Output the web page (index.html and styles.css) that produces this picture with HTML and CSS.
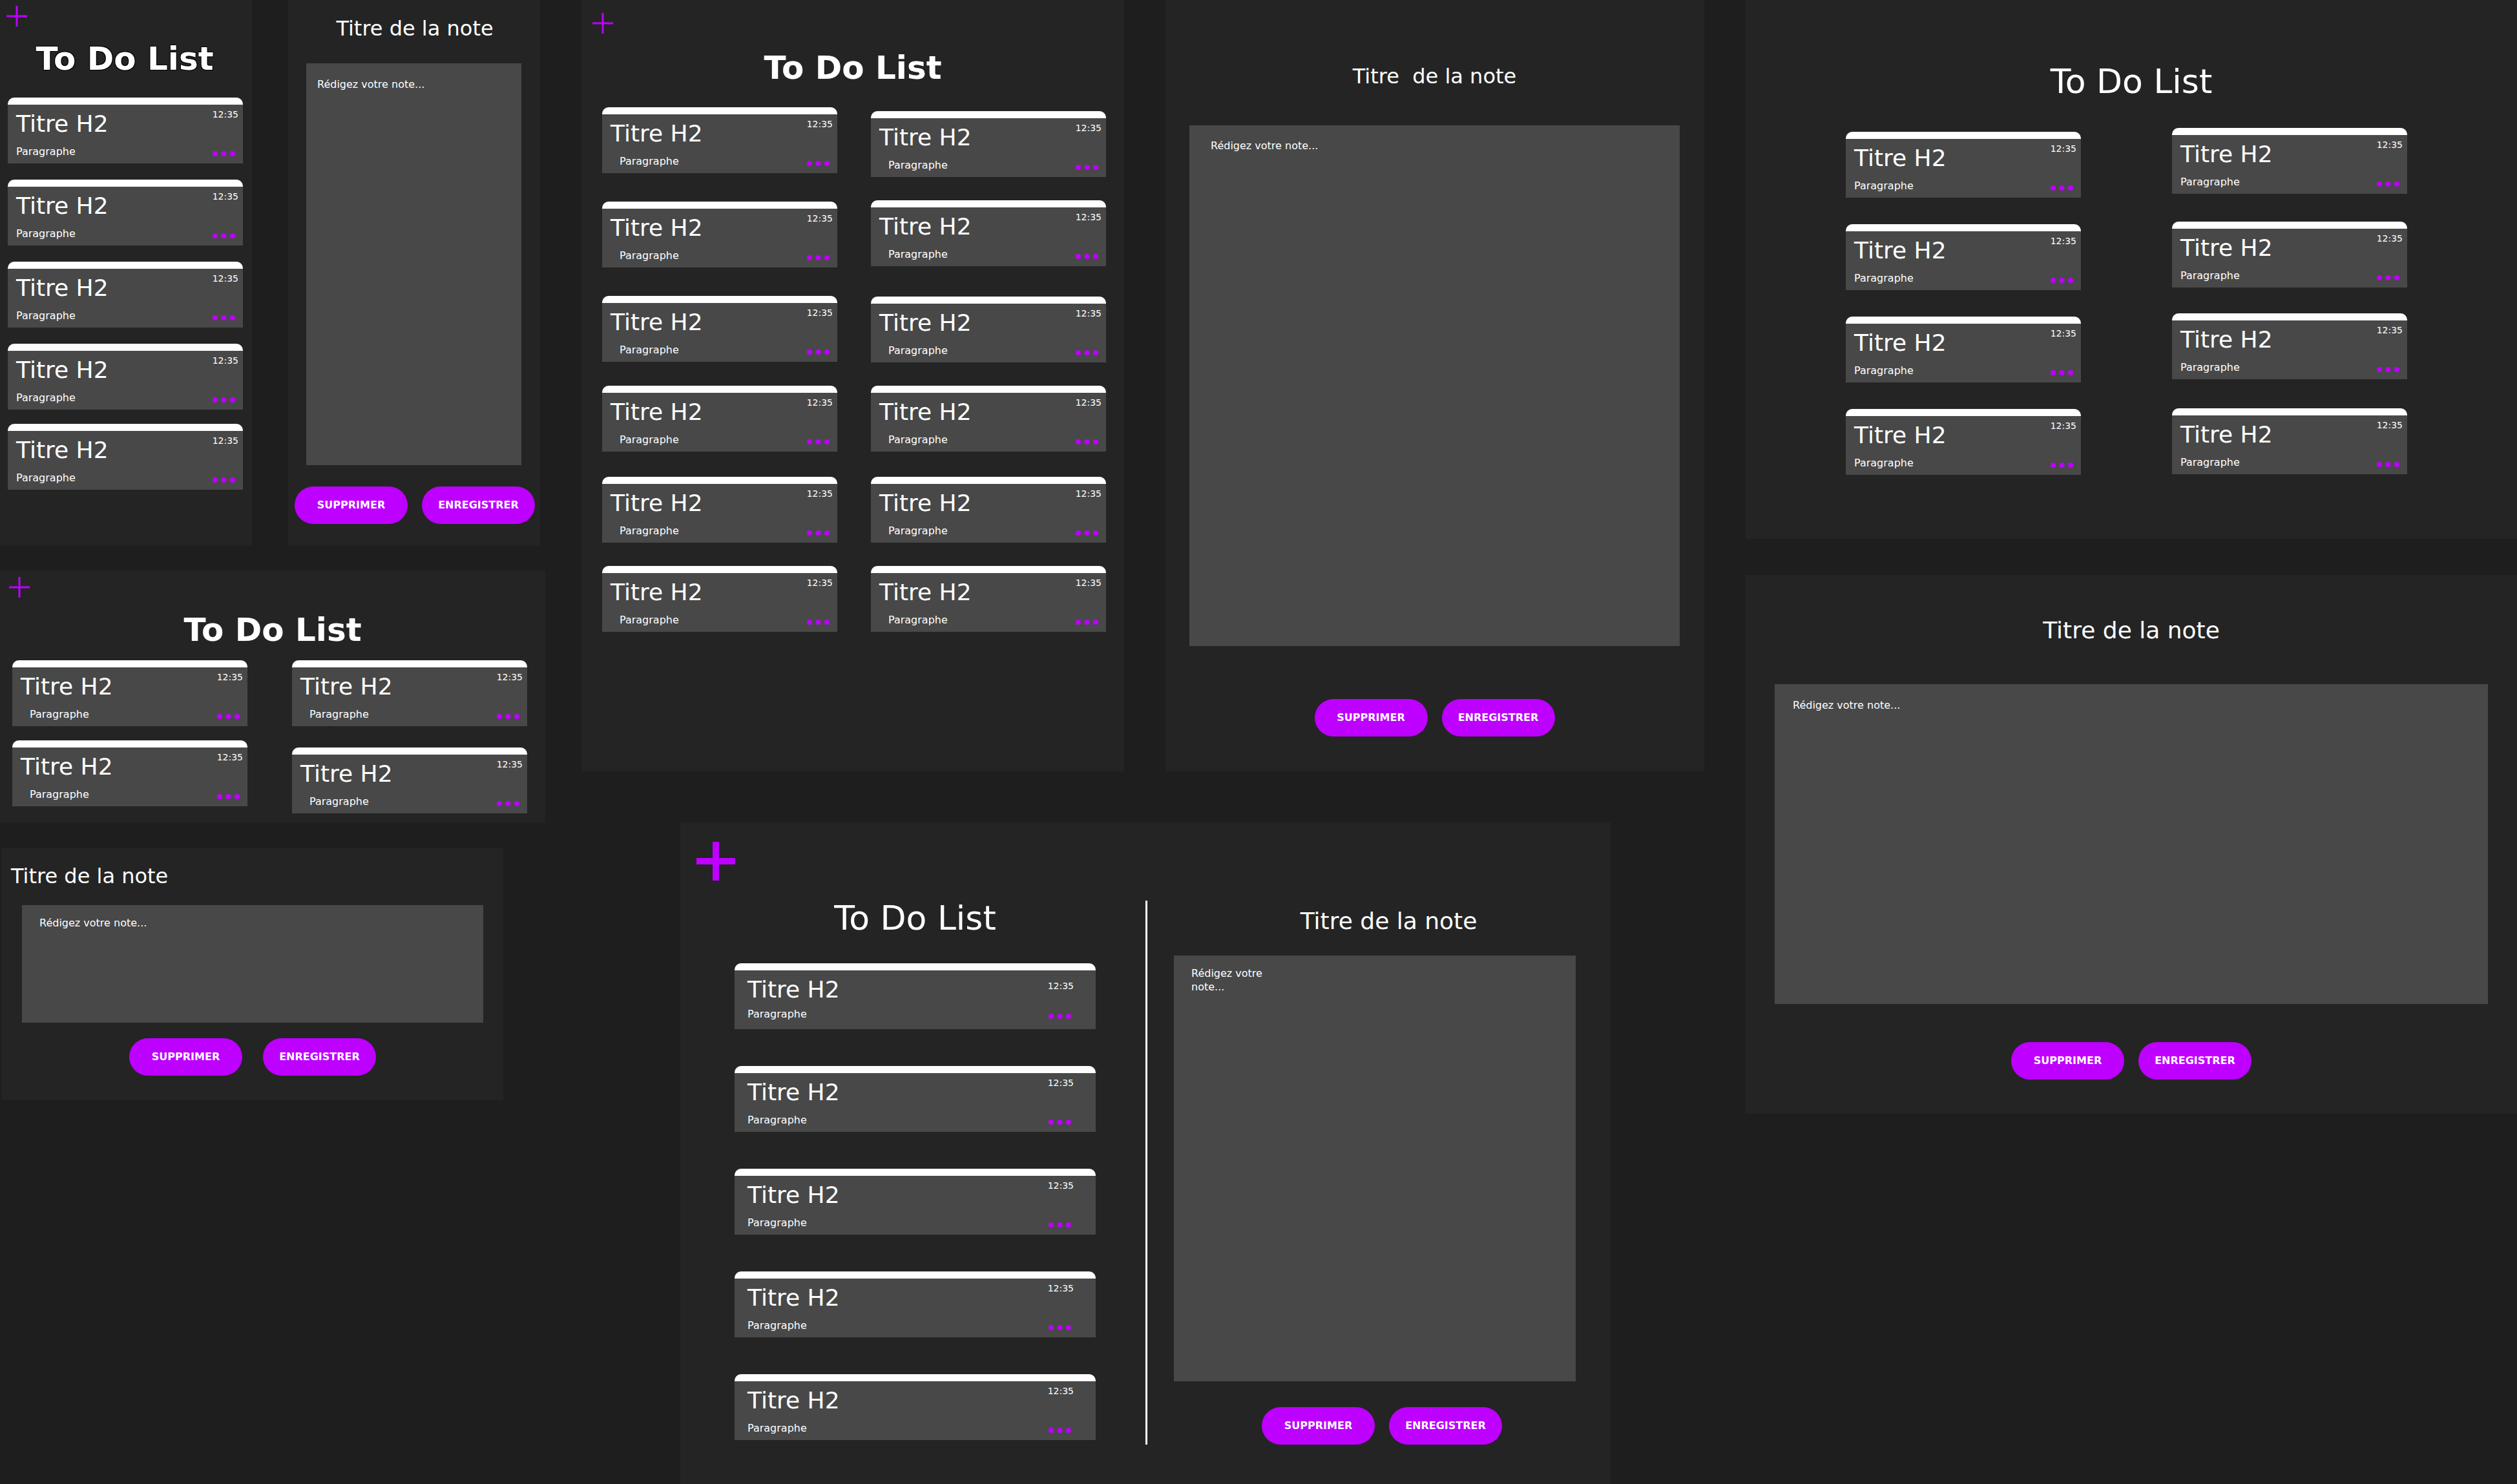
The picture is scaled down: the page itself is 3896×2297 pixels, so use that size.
FILE: index.html
```html
<!DOCTYPE html>
<html lang="fr">
<head>
<meta charset="utf-8">
<meta name="viewport" content="width=device-width, initial-scale=1">
<title>To Do List</title>
<link rel="stylesheet" href="styles.css">
</head>
<body>
<svg class="sprite" aria-hidden="true">
  <symbol id="plus" viewBox="0 0 32 32"><path d="M16 0v32M0 16h32" stroke="currentColor" stroke-width="3"/></symbol>
  <symbol id="plus-bold" viewBox="0 0 60 60"><path d="M30 0v60M0 30h60" stroke="currentColor" stroke-width="10"/></symbol>
  <symbol id="dots" viewBox="0 0 35 14"><g fill="currentColor"><circle cx="4" cy="7" r="4"/><circle cx="17.500" cy="7" r="4"/><circle cx="31" cy="7" r="4"/></g></symbol>
</svg>
<main class="canvas">
  <div class="stack stack-mobile">
    <div class="pair">
      <section class="frame list list-phone">
        <button class="add" type="button" aria-label="Ajouter"><svg><use href="#plus"/></svg></button>
        <h1 class="title title-bold title-outlined">To Do List</h1>
        <div class="columns">
          <div class="cards">
            <article class="card"><div class="main"><h2>Titre H2</h2><p>Paragraphe</p></div><div class="meta"><time>12:35</time><button type="button" aria-label="Options"><svg><use href="#dots"/></svg></button></div></article>
            <article class="card"><div class="main"><h2>Titre H2</h2><p>Paragraphe</p></div><div class="meta"><time>12:35</time><button type="button" aria-label="Options"><svg><use href="#dots"/></svg></button></div></article>
            <article class="card"><div class="main"><h2>Titre H2</h2><p>Paragraphe</p></div><div class="meta"><time>12:35</time><button type="button" aria-label="Options"><svg><use href="#dots"/></svg></button></div></article>
            <article class="card"><div class="main"><h2>Titre H2</h2><p>Paragraphe</p></div><div class="meta"><time>12:35</time><button type="button" aria-label="Options"><svg><use href="#dots"/></svg></button></div></article>
            <article class="card"><div class="main"><h2>Titre H2</h2><p>Paragraphe</p></div><div class="meta"><time>12:35</time><button type="button" aria-label="Options"><svg><use href="#dots"/></svg></button></div></article>
          </div>
        </div>
      </section>
      <section class="frame note note-phone">
        <h2 class="note-title"><label for="note-1">Titre de la note</label></h2>
        <textarea id="note-1" placeholder="Rédigez votre note..."></textarea>
        <div class="actions"><button type="button">SUPPRIMER</button><button type="button">ENREGISTRER</button></div>
      </section>
    </div>
    <section class="frame list list-landscape">
      <button class="add" type="button" aria-label="Ajouter"><svg><use href="#plus"/></svg></button>
      <h1 class="title title-bold">To Do List</h1>
      <div class="columns">
        <div class="cards">
          <article class="card"><div class="main"><h2>Titre H2</h2><p>Paragraphe</p></div><div class="meta"><time>12:35</time><button type="button" aria-label="Options"><svg><use href="#dots"/></svg></button></div></article>
          <article class="card"><div class="main"><h2>Titre H2</h2><p>Paragraphe</p></div><div class="meta"><time>12:35</time><button type="button" aria-label="Options"><svg><use href="#dots"/></svg></button></div></article>
        </div>
        <div class="cards cards-right">
          <article class="card"><div class="main"><h2>Titre H2</h2><p>Paragraphe</p></div><div class="meta"><time>12:35</time><button type="button" aria-label="Options"><svg><use href="#dots"/></svg></button></div></article>
          <article class="card"><div class="main"><h2>Titre H2</h2><p>Paragraphe</p></div><div class="meta"><time>12:35</time><button type="button" aria-label="Options"><svg><use href="#dots"/></svg></button></div></article>
        </div>
      </div>
    </section>
    <section class="frame note note-landscape">
      <h2 class="note-title"><label for="note-2">Titre de la note</label></h2>
      <textarea id="note-2" placeholder="Rédigez votre note..."></textarea>
      <div class="actions"><button type="button">SUPPRIMER</button><button type="button">ENREGISTRER</button></div>
    </section>
  </div>

  <div class="stack stack-middle">
    <div class="pair">
      <section class="frame list list-tablet">
        <button class="add" type="button" aria-label="Ajouter"><svg><use href="#plus"/></svg></button>
        <h1 class="title title-bold">To Do List</h1>
        <div class="columns">
          <div class="cards">
            <article class="card"><div class="main"><h2>Titre H2</h2><p>Paragraphe</p></div><div class="meta"><time>12:35</time><button type="button" aria-label="Options"><svg><use href="#dots"/></svg></button></div></article>
            <article class="card"><div class="main"><h2>Titre H2</h2><p>Paragraphe</p></div><div class="meta"><time>12:35</time><button type="button" aria-label="Options"><svg><use href="#dots"/></svg></button></div></article>
            <article class="card"><div class="main"><h2>Titre H2</h2><p>Paragraphe</p></div><div class="meta"><time>12:35</time><button type="button" aria-label="Options"><svg><use href="#dots"/></svg></button></div></article>
            <article class="card"><div class="main"><h2>Titre H2</h2><p>Paragraphe</p></div><div class="meta"><time>12:35</time><button type="button" aria-label="Options"><svg><use href="#dots"/></svg></button></div></article>
            <article class="card"><div class="main"><h2>Titre H2</h2><p>Paragraphe</p></div><div class="meta"><time>12:35</time><button type="button" aria-label="Options"><svg><use href="#dots"/></svg></button></div></article>
            <article class="card"><div class="main"><h2>Titre H2</h2><p>Paragraphe</p></div><div class="meta"><time>12:35</time><button type="button" aria-label="Options"><svg><use href="#dots"/></svg></button></div></article>
          </div>
          <div class="cards cards-right">
            <article class="card"><div class="main"><h2>Titre H2</h2><p>Paragraphe</p></div><div class="meta"><time>12:35</time><button type="button" aria-label="Options"><svg><use href="#dots"/></svg></button></div></article>
            <article class="card"><div class="main"><h2>Titre H2</h2><p>Paragraphe</p></div><div class="meta"><time>12:35</time><button type="button" aria-label="Options"><svg><use href="#dots"/></svg></button></div></article>
            <article class="card"><div class="main"><h2>Titre H2</h2><p>Paragraphe</p></div><div class="meta"><time>12:35</time><button type="button" aria-label="Options"><svg><use href="#dots"/></svg></button></div></article>
            <article class="card"><div class="main"><h2>Titre H2</h2><p>Paragraphe</p></div><div class="meta"><time>12:35</time><button type="button" aria-label="Options"><svg><use href="#dots"/></svg></button></div></article>
            <article class="card"><div class="main"><h2>Titre H2</h2><p>Paragraphe</p></div><div class="meta"><time>12:35</time><button type="button" aria-label="Options"><svg><use href="#dots"/></svg></button></div></article>
            <article class="card"><div class="main"><h2>Titre H2</h2><p>Paragraphe</p></div><div class="meta"><time>12:35</time><button type="button" aria-label="Options"><svg><use href="#dots"/></svg></button></div></article>
          </div>
        </div>
      </section>
      <section class="frame note note-tablet">
        <h2 class="note-title"><label for="note-3">Titre  de la note</label></h2>
        <textarea id="note-3" placeholder="Rédigez votre note..."></textarea>
        <div class="actions"><button type="button">SUPPRIMER</button><button type="button">ENREGISTRER</button></div>
      </section>
    </div>
    <section class="frame desktop">
      <button class="add add-large" type="button" aria-label="Ajouter"><svg><use href="#plus-bold"/></svg></button>
      <div class="panes">
        <div class="list list-desktop">
          <h1 class="title">To Do List</h1>
          <div class="cards">
            <article class="card card-tight"><div class="main"><h2>Titre H2</h2><p>Paragraphe</p></div><div class="meta"><time>12:35</time><button type="button" aria-label="Options"><svg><use href="#dots"/></svg></button></div></article>
            <article class="card"><div class="main"><h2>Titre H2</h2><p>Paragraphe</p></div><div class="meta"><time>12:35</time><button type="button" aria-label="Options"><svg><use href="#dots"/></svg></button></div></article>
            <article class="card"><div class="main"><h2>Titre H2</h2><p>Paragraphe</p></div><div class="meta"><time>12:35</time><button type="button" aria-label="Options"><svg><use href="#dots"/></svg></button></div></article>
            <article class="card"><div class="main"><h2>Titre H2</h2><p>Paragraphe</p></div><div class="meta"><time>12:35</time><button type="button" aria-label="Options"><svg><use href="#dots"/></svg></button></div></article>
            <article class="card"><div class="main"><h2>Titre H2</h2><p>Paragraphe</p></div><div class="meta"><time>12:35</time><button type="button" aria-label="Options"><svg><use href="#dots"/></svg></button></div></article>
          </div>
        </div>
        <div class="note note-desktop">
          <h2 class="note-title note-title-large"><label for="note-4">Titre de la note</label></h2>
          <textarea id="note-4" placeholder="Rédigez votre note..."></textarea>
          <div class="actions"><button type="button">SUPPRIMER</button><button type="button">ENREGISTRER</button></div>
        </div>
      </div>
    </section>
  </div>

  <div class="stack stack-laptop">
    <section class="frame list list-laptop">
      <h1 class="title">To Do List</h1>
      <div class="columns">
        <div class="cards">
          <article class="card"><div class="main"><h2>Titre H2</h2><p>Paragraphe</p></div><div class="meta"><time>12:35</time><button type="button" aria-label="Options"><svg><use href="#dots"/></svg></button></div></article>
          <article class="card"><div class="main"><h2>Titre H2</h2><p>Paragraphe</p></div><div class="meta"><time>12:35</time><button type="button" aria-label="Options"><svg><use href="#dots"/></svg></button></div></article>
          <article class="card"><div class="main"><h2>Titre H2</h2><p>Paragraphe</p></div><div class="meta"><time>12:35</time><button type="button" aria-label="Options"><svg><use href="#dots"/></svg></button></div></article>
          <article class="card"><div class="main"><h2>Titre H2</h2><p>Paragraphe</p></div><div class="meta"><time>12:35</time><button type="button" aria-label="Options"><svg><use href="#dots"/></svg></button></div></article>
        </div>
        <div class="cards cards-right">
          <article class="card"><div class="main"><h2>Titre H2</h2><p>Paragraphe</p></div><div class="meta"><time>12:35</time><button type="button" aria-label="Options"><svg><use href="#dots"/></svg></button></div></article>
          <article class="card"><div class="main"><h2>Titre H2</h2><p>Paragraphe</p></div><div class="meta"><time>12:35</time><button type="button" aria-label="Options"><svg><use href="#dots"/></svg></button></div></article>
          <article class="card"><div class="main"><h2>Titre H2</h2><p>Paragraphe</p></div><div class="meta"><time>12:35</time><button type="button" aria-label="Options"><svg><use href="#dots"/></svg></button></div></article>
          <article class="card"><div class="main"><h2>Titre H2</h2><p>Paragraphe</p></div><div class="meta"><time>12:35</time><button type="button" aria-label="Options"><svg><use href="#dots"/></svg></button></div></article>
        </div>
      </div>
    </section>
    <section class="frame note note-laptop">
      <h2 class="note-title note-title-large"><label for="note-5">Titre de la note</label></h2>
      <textarea id="note-5" placeholder="Rédigez votre note..."></textarea>
      <div class="actions"><button type="button">SUPPRIMER</button><button type="button">ENREGISTRER</button></div>
    </section>
  </div>
</main>
</body>
</html>
```

FILE: styles.css
```css
:root {
  --canvas: #1e1e1e;
  --frame: #242424;
  --surface: #484848;
  --accent: #bd00ff;
  --text: #ffffff;
}

* {
  box-sizing: border-box;
}

body {
  margin: 0;
  background: var(--canvas);
  color: var(--text);
  font-family: "DejaVu Sans", Verdana, sans-serif;
  font-size: 16px;
  line-height: 20px;
}

h1,
h2,
p {
  margin: 0;
  font-weight: 400;
}

button {
  border: 0;
  padding: 0;
  font: inherit;
  cursor: pointer;
}

.sprite {
  display: none;
}

/* Canvas: mobile, tablet + desktop, laptop */
.canvas {
  display: grid;
  grid-template-columns: 844fr 1794fr 1258fr;
  align-items: start;
}

.stack {
  display: flex;
  flex-direction: column;
}

.stack-mobile {
  gap: 39px;
}

.stack-middle {
  gap: 79px;
  margin-left: 56px;
}

.stack-laptop {
  gap: 56px;
  margin-left: 64px;
}

.pair {
  display: grid;
}

.stack-mobile .pair {
  grid-template-columns: 1fr 1fr;
  gap: 56px;
  padding-right: 8px;
}

.stack-middle .pair {
  grid-template-columns: 840fr 834fr;
  gap: 64px;
}

.frame {
  background: var(--frame);
}

/* Headings */
.title {
  font-size: 52px;
  line-height: 54px;
  text-align: center;
}

.title-bold {
  font-size: 50px;
  line-height: 60px;
  font-weight: 700;
}

.title-outlined {
  text-shadow: 1px 1px 0 #000, -1px -1px 0 #000, 1px -1px 0 #000, -1px 1px 0 #000;
}

.note-title {
  font-size: 32px;
  line-height: 40px;
  text-align: center;
  white-space: pre;
}

.note-title-large {
  font-size: 36px;
}

.add {
  display: block;
  background: none;
  color: var(--accent);
}

.add svg {
  display: block;
  width: 32px;
  height: 32px;
}

.add-large svg {
  width: 60px;
  height: 60px;
}

/* Cards */
.columns {
  display: flex;
}

.cards {
  display: grid;
  align-items: start;
  flex: 1 1 0;
}

.card {
  display: flex;
  justify-content: space-between;
  min-height: 102px;
  border-top: 11px solid #fff;
  border-radius: 10px 10px 0 0;
  background: var(--surface);
}

.card h2 {
  font-size: 36px;
  line-height: 42px;
}

.main,
.meta {
  display: flex;
  flex-direction: column;
  align-self: stretch;
  justify-content: space-between;
}

.main {
  padding: 9px 0 8px 13px;
}

.meta {
  align-items: flex-end;
  padding: 6px 7px 8px 0;
}

.meta time {
  font-size: 14px;
  line-height: 18px;
}

.meta button {
  margin-right: 5px;
  background: none;
  color: var(--accent);
}

.meta svg {
  display: block;
  width: 35px;
  height: 14px;
}

/* List frames */
.list-phone {
  padding: 9px 14px 0 10px;
}

.list-phone .title {
  margin: 20px 0 30px;
}

.list-phone .columns {
  padding-left: 2px;
}

.list-phone .cards {
  grid-template-rows: repeat(3, 127px) 124px auto;
}

.list-landscape {
  padding: 10px 28px 14px 14px;
}

.list-landscape .title {
  margin: 20px 0 17px 14px;
}

.list-landscape .columns {
  gap: 69px;
  padding-left: 5px;
}

.list-landscape .cards {
  grid-template-rows: 124px auto;
}

.list-landscape .cards-right {
  grid-template-rows: 135px auto;
}

.list-landscape p,
.list-tablet p {
  padding-left: 14px;
}

.list-tablet {
  padding: 20px 28px 0 17px;
}

.list-tablet .title {
  margin: 23px 0 31px 11px;
}

.list-tablet .columns {
  gap: 52px;
  padding-left: 15px;
}

.list-tablet .cards {
  grid-template-rows: 146px 146px 139px 141px 138px auto;
}

.list-tablet .cards-right {
  padding-top: 6px;
  grid-template-rows: 138px 149px 138px 141px 138px auto;
}

.list-laptop {
  padding: 99px 0 99px;
}

.list-laptop .columns {
  gap: 141px;
  padding: 45px 170px 0 155px;
}

.list-laptop .cards {
  padding-top: 6px;
  grid-template-rows: repeat(3, 143px) auto;
}

.list-laptop .cards-right {
  padding-top: 0;
  grid-template-rows: 145px 142px 147px auto;
}

/* Note frames */
textarea {
  display: block;
  width: 100%;
  border: 0;
  border-radius: 0;
  outline: 0;
  resize: none;
  background: var(--surface);
  color: var(--text);
  font: inherit;
  line-height: 21px;
}

textarea::placeholder {
  color: var(--text);
  opacity: 1;
}

.actions {
  display: flex;
  justify-content: center;
  gap: 22px;
}

.actions button {
  width: 175px;
  height: 58px;
  border-radius: 29px;
  background: var(--accent);
  color: var(--text);
  font-weight: 700;
}

.note-phone {
  display: flex;
  flex-direction: column;
  padding: 24px 8px 33px 10px;
}

.note-phone textarea {
  width: auto;
  height: 622px;
  margin: 34px 21px 33px 18px;
  padding: 22px 17px;
}

.note-landscape {
  margin: 0 65px 0 2px;
  padding: 24px 31px 37px 15px;
}

.note-landscape .note-title {
  text-align: left;
}

.note-landscape textarea {
  width: auto;
  height: 182px;
  margin: 25px 0 24px 17px;
  padding: 17px 27px;
}

.note-landscape {
  display: flex;
  flex-direction: column;
}

.note-landscape .actions {
  gap: 32px;
  padding-left: 17px;
}

.note-tablet {
  padding: 98px 38px 54px 37px;
}

.note-tablet textarea {
  height: 806px;
  margin: 56px 0 82px;
  padding: 21px 33px;
}

.note-laptop {
  padding: 66px 45px 53px;
}

.note-laptop textarea {
  height: 495px;
  margin: 63px 0 59px;
  padding: 22px 28px;
}

/* Desktop frame: list and note side by side */
.desktop {
  margin: 0 145px 0 153px;
  padding: 30px 54px 61px 25px;
}

.panes {
  display: grid;
  grid-template-columns: 698fr 663fr;
  margin-top: 31px;
}

.list-desktop {
  padding: 0 77px 0 59px;
  border-right: 3px solid #fff;
}

.list-desktop .title {
  margin-bottom: 43px;
}

.list-desktop .cards {
  row-gap: 57px;
}

.list-desktop .main {
  padding-left: 20px;
}

.list-desktop .meta {
  padding-right: 34px;
}

.list-desktop .meta button {
  margin-right: 4px;
}

.card-tight .main {
  padding-bottom: 13px;
}

.card-tight .meta {
  padding-top: 15px;
  padding-bottom: 13px;
}

.note-desktop {
  padding: 12px 0 0 41px;
}

.note-desktop .note-title {
  padding-left: 43px;
}

.note-desktop textarea {
  height: 659px;
  margin: 33px 0 40px;
  padding: 17px 460px 17px 27px;
}

.note-desktop .actions {
  padding-left: 22px;
}
```
